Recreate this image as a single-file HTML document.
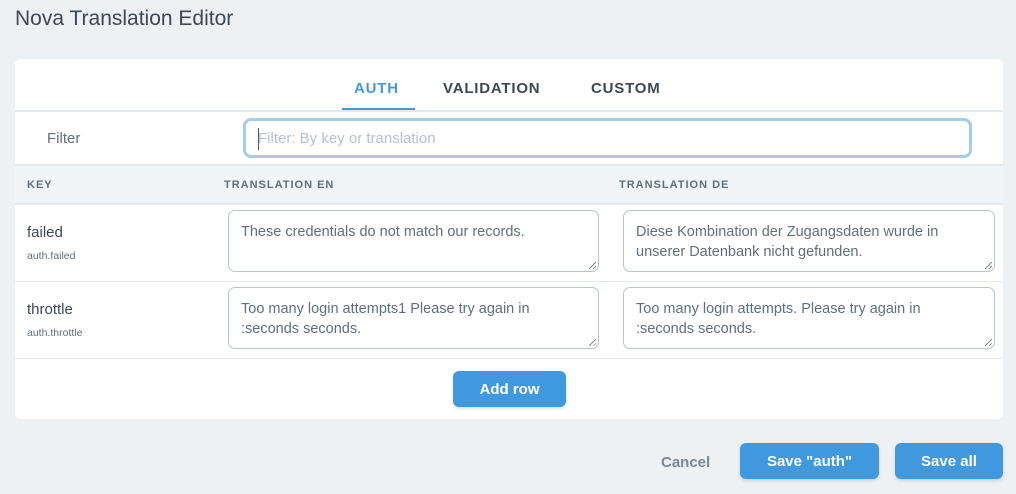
<!DOCTYPE html>
<html><head><style>
body{margin:0;width:1016px;height:494px;background:#eef1f4;font-family:"Liberation Sans",sans-serif;position:relative;overflow:hidden;color:#3d4852}
.a{position:absolute}
h1{position:absolute;left:15px;top:7px;margin:0;font-size:21px;font-weight:normal;color:#3d4852}
.card{left:15px;top:59px;width:988px;height:360px;background:#fff;border-radius:6px;overflow:hidden}
.tab{top:80px;font-size:15px;font-weight:bold;letter-spacing:.8px;color:#3d4852}
.ta{border:1px solid #b8c4ce;border-radius:7px;background:#fff;font-size:14.5px;color:#606f7b;padding:11px 12px;box-sizing:border-box;line-height:20px}
.ta:after{content:"";position:absolute;right:2px;bottom:2px;width:7px;height:7px;background:linear-gradient(135deg,transparent 45%,#888 45%,#888 55%,transparent 55%,transparent 75%,#888 75%,#888 85%,transparent 85%)}
.th{top:179px;font-size:11px;font-weight:bold;letter-spacing:1px;color:#606f7b}
.btn{background:#4099de;color:#fff;font-weight:bold;font-size:15px;border-radius:6px;text-align:center;box-shadow:0 2px 3px rgba(0,0,0,.12);line-height:38px}
</style></head><body>
<h1>Nova Translation Editor</h1>
<div class="a card"></div>
<div class="a tab" style="left:354px;color:#4099de">AUTH</div>
<div class="a" style="left:342px;top:108px;width:73px;height:3px;background:#4099de"></div>
<div class="a tab" style="left:443px">VALIDATION</div>
<div class="a tab" style="left:591px">CUSTOM</div>
<div class="a" style="left:15px;top:110px;width:988px;height:2px;background:#e4e9ee"></div>
<div class="a" style="left:47px;top:130px;font-size:15px;color:#606f7b">Filter</div>
<div class="a" style="left:243px;top:118px;width:729px;height:40px;border:3px solid #a3cdef;border-radius:8px;box-sizing:border-box"></div>
<div class="a" style="left:258px;top:130px;font-size:15px;color:#b8c2cc">Filter: By key or translation</div>
<div class="a" style="left:258px;top:128px;width:1px;height:22px;background:#555"></div>
<div class="a" style="left:15px;top:164px;width:988px;height:41px;background:#f1f5f8;border-top:2px solid #e4e9ee;border-bottom:2px solid #e4e9ee;box-sizing:border-box"></div>
<div class="a th" style="left:27px">KEY</div>
<div class="a th" style="left:224px">TRANSLATION EN</div>
<div class="a th" style="left:619px">TRANSLATION DE</div>
<div class="a" style="left:27px;top:224px;font-size:15px">failed</div>
<div class="a" style="left:27px;top:250px;font-size:10.5px;color:#606f7b">auth.failed</div>
<div class="a ta" style="left:228px;top:210px;width:371px;height:62px">These credentials do not match our records.</div>
<div class="a ta" style="left:623px;top:210px;width:372px;height:62px">Diese Kombination der Zugangsdaten wurde in unserer Datenbank nicht gefunden.</div>
<div class="a" style="left:15px;top:281px;width:988px;height:1px;background:#e4e9ee"></div>
<div class="a" style="left:27px;top:301px;font-size:15px">throttle</div>
<div class="a" style="left:27px;top:327px;font-size:10.5px;color:#606f7b">auth.throttle</div>
<div class="a ta" style="left:228px;top:287px;width:371px;height:62px">Too many login attempts1 Please try again in :seconds seconds.</div>
<div class="a ta" style="left:623px;top:287px;width:372px;height:62px">Too many login attempts. Please try again in :seconds seconds.</div>
<div class="a" style="left:15px;top:358px;width:988px;height:1px;background:#e4e9ee"></div>
<div class="a btn" style="left:453px;top:371px;width:113px;height:36px">Add row</div>
<div class="a" style="left:661px;top:454px;font-size:15px;font-weight:bold;color:#7b8791">Cancel</div>
<div class="a btn" style="left:740px;top:443px;width:139px;height:36px">Save "auth"</div>
<div class="a btn" style="left:895px;top:443px;width:108px;height:36px">Save all</div>
</body></html>
